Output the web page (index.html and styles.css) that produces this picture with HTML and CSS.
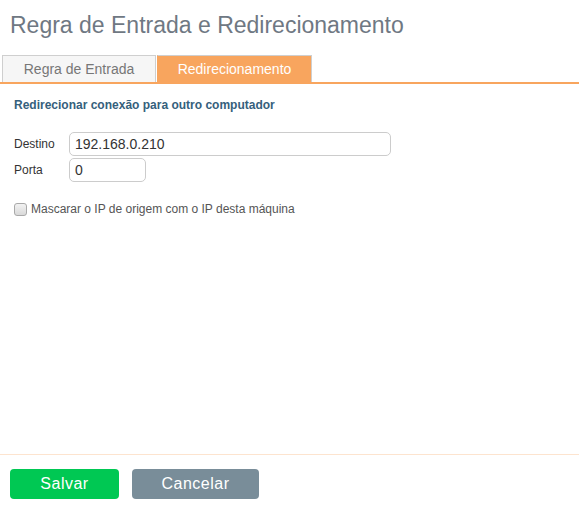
FILE: index.html
```html
<!DOCTYPE html>
<html>
<head>
    <title>Regra de Entrada e Redirecionamento</title>
    <link rel="stylesheet" href="styles.css">
</head>
<body>
    <div class="main">
        <h1 class="title">Regra de Entrada e Redirecionamento</h1>

        <!-- Abas -->
        <div class="tabs">
            <div class="tab">Regra de Entrada</div>
            <div class="tab active">Redirecionamento</div>
        </div>

        <div class="panel">
            <h2 class="panel-heading">Redirecionar conexão para outro computador</h2>

            <div class="form-row">
                <label class="field-label" for="destino">Destino</label>
                <input class="field-input wide" id="destino" type="text" value="192.168.0.210">
            </div>
            <div class="form-row">
                <label class="field-label" for="porta">Porta</label>
                <input class="field-input short" id="porta" type="text" value="0">
            </div>

            <label class="check-row">
                <input class="check" type="checkbox">
                Mascarar o IP de origem com o IP desta máquina
            </label>
        </div>
    </div>

    <!-- Botões de ação -->
    <div class="footer">
        <button class="btn btn-save">Salvar</button>
        <button class="btn btn-cancel">Cancelar</button>
    </div>
</body>
</html>
```

FILE: styles.css
```css
body {
    display: flex;
    flex-direction: column;
    height: 100vh;
    margin: 0;
    font-family: "Liberation Sans", Arial, sans-serif;
    color: #333;
    background: white;
}

.main {
    flex: 1;
}

.title {
    margin: 12px 0 0 10px;
    font-size: 23px;
    line-height: 26px;
    font-weight: normal;
    color: #6f7883;
}

/* Abas */
.tabs {
    display: flex;
    gap: 1px;
    margin-top: 17px;
    padding-left: 2px;
    border-bottom: 2px solid #f8a55e;
}

.tab {
    box-sizing: border-box;
    width: 154px;
    border: 1px solid #cfcfcf;
    border-bottom: none;
    background-color: #f6f6f6;
    color: #777;
    font-size: 14px;
    line-height: 26px;
    text-align: center;
}

.tab.active {
    width: 155px;
    background-color: #f8a55e;
    border-left-color: #f8a55e;
    color: white;
}

.panel {
    padding: 13px 14px 0;
}

.panel-heading {
    margin: 0 0 19px;
    font-size: 12px;
    line-height: 16px;
    font-weight: bold;
    color: #35607c;
}

.form-row {
    display: flex;
    align-items: center;
    margin-bottom: 2px;
}

.field-label {
    width: 55px;
    font-size: 12px;
}

.field-input {
    box-sizing: border-box;
    height: 24px;
    padding: 0 5px;
    border: 1px solid #cccccc;
    border-radius: 5px;
    font-family: "Liberation Sans", Arial, sans-serif;
    font-size: 14px;
    color: #333;
}

.field-input.wide {
    width: 322px;
}

.field-input.short {
    width: 77px;
}

.check-row {
    display: flex;
    align-items: center;
    margin-top: 19px;
    font-size: 12px;
    line-height: 16px;
    color: #555;
}

.check {
    appearance: none;
    box-sizing: border-box;
    width: 13px;
    height: 13px;
    margin: 0 4px 0 0;
    border: 1px solid #a9a9a9;
    border-radius: 3px;
    background: linear-gradient(#f2f2f2, #d9d9d9);
}

/* Rodapé */
.footer {
    display: flex;
    gap: 13px;
    padding: 14px 10px 9px;
    border-top: 1px solid #fde4cf;
}

.btn {
    height: 30px;
    border: none;
    border-radius: 4px;
    color: white;
    font-family: "Liberation Sans", Arial, sans-serif;
    font-size: 16px;
    letter-spacing: 0.5px;
    cursor: pointer;
}

.btn-save {
    width: 109px;
    background-color: #00c853;
}

.btn-cancel {
    width: 127px;
    background-color: #798d99;
}
```
